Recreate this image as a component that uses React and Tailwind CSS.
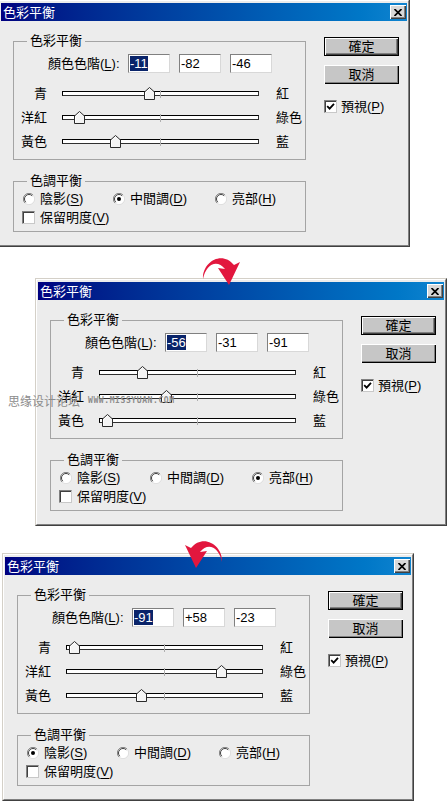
import React from "react";

const U = ({ children }) => (
  <span className="underline decoration-1 underline-offset-[2px]">{children}</span>
);

function Radio({ on }) {
  return (
    <svg width="12" height="12" viewBox="0 0 12 12" className="shrink-0">
      <circle cx="6" cy="6" r="5.5" fill="#fff" />
      <path d="M10 2 A5.6 5.6 0 0 0 2 10" fill="none" stroke="#808080" strokeWidth="1" />
      <path d="M9.2 2.8 A4.5 4.5 0 0 0 2.8 9.2" fill="none" stroke="#404040" strokeWidth="1" />
      <path d="M2 10 A5.6 5.6 0 0 0 10 2" fill="none" stroke="#dedede" strokeWidth="1" />
      {on && <circle cx="6" cy="6" r="2" fill="#000" />}
    </svg>
  );
}

function Check({ on }) {
  return (
    <div className="flex h-[13px] w-[13px] shrink-0 items-center justify-center border border-t-[#808080] border-l-[#808080] border-r-[#c8c8c8] border-b-[#c8c8c8] bg-white shadow-[inset_1px_1px_0_#404040]">
      {on && (
        <svg width="9" height="9" viewBox="0 0 9 9">
          <path d="M1.2 4.2 L3.6 6.6 L8 1.8" fill="none" stroke="#000" strokeWidth="1.8" />
        </svg>
      )}
    </div>
  );
}

function Slider({ value }) {
  const x = 98.5 + value * 0.985;
  return (
    <div className="relative h-[24px] w-[197px]">
      <div className="absolute left-0 right-0 top-[10px] h-[5px] border border-t-[#000000] border-l-[#000000] border-b-[#303030] border-r-[#303030] bg-white" />
      <div className="absolute left-[98px] top-[9px] h-[8px] w-px bg-[#b0b0b0]" />
      <svg
        className="absolute top-[6px]"
        style={{ left: x - 5.5 }}
        width="11"
        height="13"
        viewBox="0 0 11 13"
      >
        <path d="M0.5 12.5 V5 L5.5 0.5 L10.5 5 V12.5 Z" fill="#f4f4f4" stroke="#2a2a2a" strokeWidth="1" />
        <path d="M1.5 11.5 V5.4 L5.5 1.8" fill="none" stroke="#ffffff" strokeWidth="1" />
      </svg>
    </div>
  );
}

function Btn({ children, def }) {
  const face = (
    <div className="flex h-[17px] w-[73px] items-center justify-center bg-[#c6c6c6] text-[13px] leading-none shadow-[inset_1px_1px_0_#ffffff,inset_-1px_-1px_0_#404040,inset_-2px_-2px_0_#808080]">
      {children}
    </div>
  );
  return def ? (
    <div className="w-[75px] border border-black">{face}</div>
  ) : (
    <div className="flex h-[19px] w-[75px] items-center justify-center bg-[#c6c6c6] text-[13px] leading-none shadow-[inset_1px_1px_0_#ffffff,inset_-1px_-1px_0_#000000,inset_-2px_-2px_0_#808080]">
      {children}
    </div>
  );
}

function Field({ children, selected }) {
  return (
    <div className="flex h-[19px] w-[42px] items-center border border-t-[#808080] border-l-[#808080] border-r-[#d8d8d8] border-b-[#d8d8d8] bg-white pl-[1px] text-[13px] leading-[15px]">
      {selected ? <span className="bg-[#0a246a] text-white">{children}</span> : children}
    </div>
  );
}

function SliderRow({ left, right, value }) {
  return (
    <div className="flex h-[24px] items-center">
      <div className="w-[33px] text-right text-[13px] leading-none">{left}</div>
      <div className="ml-[15px]">
        <Slider value={value} />
      </div>
      <div className="ml-[17px] text-[13px] leading-none">{right}</div>
    </div>
  );
}

const fmt = (v) => (v > 0 ? "+" + v : String(v));

function Dialog({ vals, tone, className }) {
  return (
    <div
      className={
        "h-[248px] w-[412px] shrink-0 border border-t-[#d4d0c8] border-l-[#d4d0c8] border-r-[#404040] border-b-[#404040] bg-[#ececec] " +
        className
      }
    >
      <div className="h-full border border-t-white border-l-white border-r-[#808080] border-b-[#808080] px-[1px] pt-[2px]">
        <div className="flex h-[18px] items-center justify-between bg-linear-to-r from-[#000080] to-[#1084d0] pl-[2px] pr-[1px]">
          <span className="text-[13px] leading-none text-white">色彩平衡</span>
          <div className="flex h-[14px] w-[16px] items-center justify-center bg-[#d8d8d8] shadow-[inset_1px_1px_0_#ffffff,inset_-1px_-1px_0_#404040,inset_-2px_-2px_0_#808080]">
            <svg width="8" height="7" viewBox="0 0 8 7">
              <path d="M0.5 0 L7.5 7 M7.5 0 L0.5 7" stroke="#000" strokeWidth="1.7" />
            </svg>
          </div>
        </div>
        <div className="flex">
          <div className="ml-[12px] mt-[12px] w-[293px]">
            <fieldset className="h-[127px] w-[293px] border border-[#a4a4a4]">
              <legend className="ml-[13px] px-[3px] text-[13px] leading-[16px]">色彩平衡</legend>
              <div className="mt-[5px] flex items-center pl-[34px]">
                <div className="w-[80px] text-[13px] leading-none">
                  顏色色階(<U>L</U>):
                </div>
                <Field selected>{fmt(vals[0])}</Field>
                <div className="ml-[9px]">
                  <Field>{fmt(vals[1])}</Field>
                </div>
                <div className="ml-[9px]">
                  <Field>{fmt(vals[2])}</Field>
                </div>
              </div>
              <div className="mt-[8px]">
                <SliderRow left="青" right="紅" value={vals[0]} />
                <SliderRow left="洋紅" right="綠色" value={vals[1]} />
                <SliderRow left="黃色" right="藍" value={vals[2]} />
              </div>
            </fieldset>
            <fieldset className="mt-[13px] h-[59px] w-[293px] border border-[#a4a4a4]">
              <legend className="ml-[13px] px-[3px] text-[13px] leading-[16px]">色調平衡</legend>
              <div className="flex h-[19px] items-center pl-[9px] text-[13px] leading-none">
                <div className="flex w-[90px] items-center gap-[5px]">
                  <Radio on={tone === 0} />
                  <span>
                    陰影(<U>S</U>)
                  </span>
                </div>
                <div className="flex w-[102px] items-center gap-[5px]">
                  <Radio on={tone === 1} />
                  <span>
                    中間調(<U>D</U>)
                  </span>
                </div>
                <div className="flex items-center gap-[5px]">
                  <Radio on={tone === 2} />
                  <span>
                    亮部(<U>H</U>)
                  </span>
                </div>
              </div>
              <div className="flex h-[19px] items-center gap-[5px] pl-[8px] text-[13px] leading-none">
                <Check />
                <span>
                  保留明度(<U>V</U>)
                </span>
              </div>
            </fieldset>
          </div>
          <div className="ml-[18px] mt-[16px] flex flex-col">
            <Btn def>確定</Btn>
            <div className="mt-[9px]">
              <Btn>取消</Btn>
            </div>
            <div className="mt-[16px] flex items-center gap-[4px] text-[13px] leading-none">
              <Check on />
              <span>
                預視(<U>P</U>)
              </span>
            </div>
          </div>
        </div>
      </div>
    </div>
  );
}

export default function App() {
  return (
    <div className="relative flex h-[804px] w-[448px] flex-col overflow-hidden bg-white font-['Liberation_Sans','Noto_Sans_CJK_TC',sans-serif] text-black">
      <Dialog vals={[-11, -82, -46]} tone={1} className="ml-[-2px] mt-[-1px]" />
      <Dialog vals={[-56, -31, -91]} tone={2} className="ml-[35px] mt-[31px]" />
      <Dialog vals={[-91, 58, -23]} tone={0} className="ml-[2px] mt-[27px]" />

      <div className="pointer-events-none absolute left-[8px] top-[395px] flex items-center gap-[8px] text-[#8c8c8c]">
        <span className="font-['Noto_Sans_CJK_SC',sans-serif] text-[12px] leading-none">思缘设计论坛</span>
        <span className="font-['DejaVu_Sans_Mono',monospace] text-[8px] font-bold leading-none tracking-[0.6px]">
          WWW.MISSYUAN.COM
        </span>
      </div>

      <svg className="pointer-events-none absolute left-0 top-0" width="448" height="804" viewBox="0 0 448 804">
        <path
          d="M203 279 C202 262 222 250 234 265 L240 262 L229 285 L218 268 L225 269 C217 259 206 264 203 279 Z"
          fill="#e2173e"
        />
        <path
          transform="translate(425 283) scale(-1 1)"
          d="M203 279 C202 262 222 250 234 265 L240 262 L229 285 L218 268 L225 269 C217 259 206 264 203 279 Z"
          fill="#e2173e"
        />
      </svg>
    </div>
  );
}
